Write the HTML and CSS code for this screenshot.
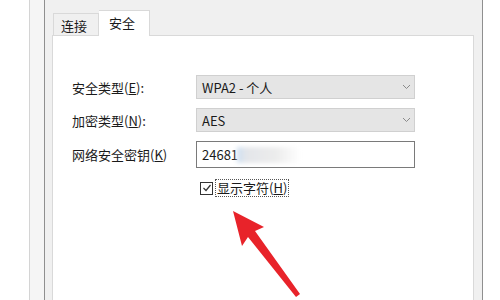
FILE: index.html
```html
<html>
  <head>
    <title>无线网络属性</title>
    <meta charset="utf-8" />
    <link rel="stylesheet" href="styles.css">
  </head>
  <body>
    <div class="outer">
      <div class="dialog">
        <div class="tabs">
          <div class="tab">连接</div>
          <div class="tab active">安全</div>
        </div>
        <div class="pane">
          <div class="form">
            <label class="lbl">安全类型(<u>E</u>):</label>
            <div class="combo">
              <span>WPA2 - 个人</span>
              <svg class="chev" width="9" height="6" viewBox="0 0 9 6"><path d="M1 1 L4.5 4.5 L8 1" fill="none" stroke="#8a8a8a" stroke-width="1"/></svg>
            </div>
            <label class="lbl">加密类型(<u>N</u>):</label>
            <div class="combo">
              <span>AES</span>
              <svg class="chev" width="9" height="6" viewBox="0 0 9 6"><path d="M1 1 L4.5 4.5 L8 1" fill="none" stroke="#8a8a8a" stroke-width="1"/></svg>
            </div>
            <label class="lbl">网络安全密钥(<u>K</u>)</label>
            <div class="field">
              <span>24681</span><span class="blur"></span>
            </div>
            <div></div>
            <div class="check-row">
              <span class="box">
                <svg width="10" height="10" viewBox="0 0 10 10"><path d="M1.5 5 L4 7.5 L8.5 2" fill="none" stroke="#333" stroke-width="1.2"/></svg>
              </span>
              <span class="check-text">显示字符(<u>H</u>)</span>
            </div>
          </div>
        </div>
      </div>
    </div>

    <svg class="arrow" width="500" height="300" viewBox="0 0 500 300">
      <path d="M233 211 L264 227 L255 231 L300 294 L296 297 L248 237 L242 246 Z" fill="#e8232a"/>
    </svg>
  </body>
</html>
```

FILE: styles.css
```css
body{
    margin: 0;
    padding: 0;
    width: 500px;
    height: 300px;
    overflow: hidden;
    background-color: #ffffff;
    font-family: "Noto Sans CJK SC", "Noto Sans", sans-serif;
    font-size: 13px;
    color: #1a1a1a;
    position: relative;
}

.outer{
    margin-left: 29px;
    width: 454px;
    height: 300px;
    border-left: 1px solid #d4d4d4;
    background-color: #f5f5f5;
    padding-left: 14px;
    box-sizing: border-box;
}

.dialog{
    height: 100%;
    border-left: 1px solid #8f8f8f;
    border-right: 1px solid #8f8f8f;
    background-color: #f0f0f0;
    padding: 10px 8px 0 7px;
    display: flex;
    flex-direction: column;
}

.tabs{
    display: flex;
    align-items: flex-end;
    height: 25px;
    padding-left: 1px;
    position: relative;
    z-index: 2;
}

.tab{
    height: 22px;
    line-height: 24px;
    padding: 0 0 0 7px;
    border: 1px solid #d9d9d9;
    border-bottom: none;
    box-sizing: border-box;
    width: 46px;
    white-space: nowrap;
}

.tab.active{
    height: 26px;
    margin-bottom: -1px;
    line-height: 24px;
    width: 51px;
    padding-left: 10px;
    background-color: #ffffff;
    border-left: none;
}

.pane{
    flex: 1;
    background-color: #ffffff;
    border: 1px solid #d9d9d9;
    border-bottom: none;
    padding: 39px 0 0 19px;
}

.form{
    display: grid;
    grid-template-columns: 124px 219px;
    grid-auto-rows: auto;
    row-gap: 9px;
    align-items: center;
}

.lbl{
    white-space: nowrap;
}

.combo{
    height: 24px;
    box-sizing: border-box;
    background-color: #e5e5e5;
    border: 1px solid #d0d0d0;
    display: flex;
    align-items: center;
    justify-content: space-between;
    padding: 0 3px 0 5px;
}

.field{
    height: 27px;
    box-sizing: border-box;
    background-color: #ffffff;
    border: 1px solid #7a7a7a;
    display: flex;
    align-items: center;
    padding-left: 5px;
}

.blur{
    display: inline-block;
    width: 64px;
    height: 16px;
    margin-left: -1px;
    background: linear-gradient(90deg, #cfe0f2 0%, #e4e6ea 15%, #ececec 60%, #ffffff 100%);
    filter: blur(2px);
}

.check-row{
    display: flex;
    align-items: center;
    margin-top: 2px;
    margin-left: 4px;
}

.box{
    width: 11px;
    height: 11px;
    border: 1px solid #333;
    display: flex;
    align-items: center;
    justify-content: center;
    background-color: #ffffff;
}

.check-text{
    margin-left: 2px;
    padding: 0 1px;
    border: 1px dotted #555;
    line-height: 16px;
}

.arrow{
    position: absolute;
    left: 0;
    top: 0;
    pointer-events: none;
}
```
